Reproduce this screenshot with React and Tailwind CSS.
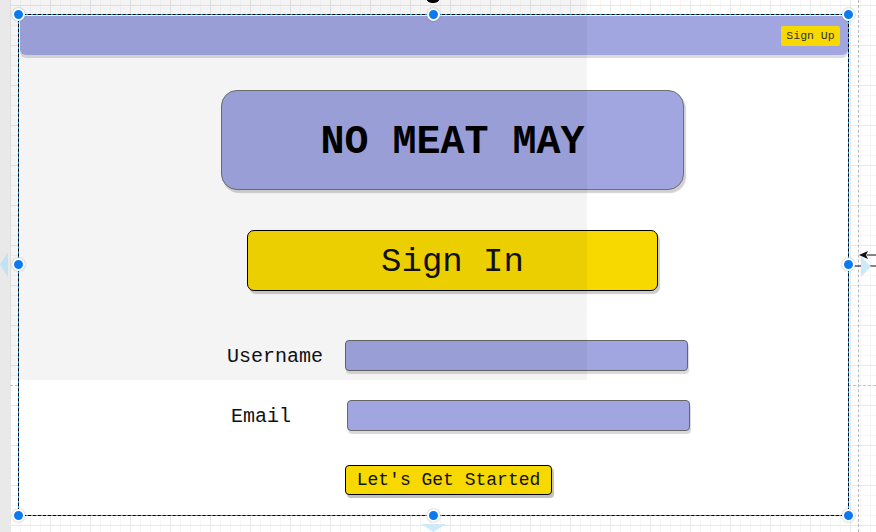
import React from "react";

const mono = "font-['Liberation_Mono','Courier_New',monospace]";

const Handle = ({ className }) => (
  <div
    className={`absolute w-[13px] h-[13px] rounded-full bg-[#0b79f0] border-2 border-white shadow-[0_0_2px_rgba(0,0,0,0.35)] ${className}`}
  />
);

export default function App() {
  return (
    <div className="relative w-[876px] h-[532px] overflow-hidden bg-white flex [background-image:linear-gradient(to_right,#e9e9e9_1px,transparent_1px),linear-gradient(to_bottom,#e9e9e9_1px,transparent_1px),linear-gradient(to_right,#f6f6f6_1px,transparent_1px),linear-gradient(to_bottom,#f6f6f6_1px,transparent_1px)] [background-size:40px_40px,40px_40px,10px_10px,10px_10px] [background-position:10px_5px,10px_5px,0px_5px,0px_5px]">
      {/* left ruler strip */}
      <div className="w-[10px] h-full bg-[#e9e9e9] shrink-0 z-30" />

      {/* page break lines */}
      <div className="absolute left-[858px] top-0 h-full border-l border-dashed border-[#b8b8b8]" />
      <div className="absolute left-0 top-[385px] w-full border-t border-dashed border-[#c4c4c4]" />

      {/* mockup frame */}
      <div className="ml-[8px] mt-[14px] w-[831px] h-[502px] bg-[#2aa3ee] relative z-10">
        <div className={`w-full h-full border border-dashed border-black bg-white bg-clip-padding flex flex-col text-[#111] ${mono}`}>
          {/* top bar */}
          <div className="mt-[1px] ml-[1px] h-[39px] shrink-0 bg-[#a1a6e0] rounded-b-[6px] shadow-[0_3px_0_#dcdcdc] flex items-center justify-end pr-[8px]">
            <button className="w-[59px] h-[20px] bg-[#f7d900] rounded-[2px] text-[11.5px] leading-none text-[#333] flex items-center justify-center">
              Sign Up
            </button>
          </div>

          {/* title */}
          <div className="mt-[35px] ml-[202px] w-[463px] h-[100px] shrink-0 bg-[#a1a6e0] border border-[#707070] rounded-[16px] shadow-[2px_3px_1px_rgba(0,0,0,0.18)] flex items-center justify-center pt-[5px]">
            <span className="text-[40px] font-bold text-black leading-none">NO MEAT MAY</span>
          </div>

          {/* sign in */}
          <button className="mt-[40px] ml-[228px] w-[411px] h-[61px] shrink-0 bg-[#f7d900] border border-black rounded-[7px] shadow-[2px_3px_1px_rgba(0,0,0,0.2)] flex items-center justify-center pt-[2px] text-[34px] leading-none">
            Sign In
          </button>

          {/* username */}
          <div className="mt-[49px] pl-[208px] flex items-center shrink-0">
            <span className="w-[118px] text-[20px] leading-none pt-[3px]">Username</span>
            <div className="w-[343px] h-[31px] bg-[#a1a6e0] border border-[#666] rounded-[4px] shadow-[1px_3px_1px_rgba(0,0,0,0.15)]" />
          </div>

          {/* email */}
          <div className="mt-[29px] pl-[212px] flex items-center shrink-0">
            <span className="w-[116px] text-[20px] leading-none pt-[3px]">Email</span>
            <div className="w-[343px] h-[31px] bg-[#a1a6e0] border border-[#666] rounded-[4px] shadow-[1px_3px_1px_rgba(0,0,0,0.15)]" />
          </div>

          {/* submit */}
          <button className="mt-[34px] ml-[326px] w-[207px] h-[30px] shrink-0 bg-[#f7d900] border border-black rounded-[4px] shadow-[2px_3px_1px_rgba(0,0,0,0.25)] flex items-center justify-center text-[18px] leading-none">
            Let's Get Started
          </button>
        </div>
      </div>

      {/* hover shade over the left part */}
      <div className="absolute left-[10px] top-0 w-[577px] h-[380px] bg-black/[0.045] pointer-events-none z-20" />

      {/* connector arrow on the right */}
      <svg className="absolute left-[849px] top-[246px] z-30" width="27" height="24" viewBox="0 0 27 24">
        <path d="M4 20 L27 20" stroke="#111" strokeWidth="1" />
        <path d="M18 9 L27 9" stroke="#111" strokeWidth="1" />
        <path d="M10 9 L19 5 L17 9 L19 13 Z" fill="#111" />
      </svg>

      {/* hover arrows */}
      <svg className="absolute left-0 top-[252px] z-40" width="8" height="25" viewBox="0 0 8 25">
        <path d="M8 0 L0 12.5 L8 25 Z" fill="#bfe3f5" />
      </svg>
      <svg className="absolute left-[861px] top-[256px] z-30" width="10" height="21" viewBox="0 0 10 21">
        <path d="M0 0 L10 10.5 L0 21 Z" fill="#cfeaf7" />
      </svg>
      <svg className="absolute left-[421px] top-[524px] z-30" width="25" height="8" viewBox="0 0 25 8">
        <path d="M0 0 L25 0 L12.5 8 Z" fill="#cfeaf7" />
      </svg>

      {/* rotate handle peeking at top */}
      <div className="absolute left-[426px] top-[-9px] w-[14px] h-[12px] rounded-full bg-black z-30" />

      {/* selection handles */}
      <div className="absolute inset-0 z-40 pointer-events-none">
        <Handle className="left-[12px] top-[8px]" />
        <Handle className="left-[427px] top-[8px]" />
        <Handle className="left-[842px] top-[8px]" />
        <Handle className="left-[12px] top-[258px]" />
        <Handle className="left-[842px] top-[258px]" />
        <Handle className="left-[12px] top-[509px]" />
        <Handle className="left-[427px] top-[509px]" />
        <Handle className="left-[842px] top-[509px]" />
      </div>
    </div>
  );
}
